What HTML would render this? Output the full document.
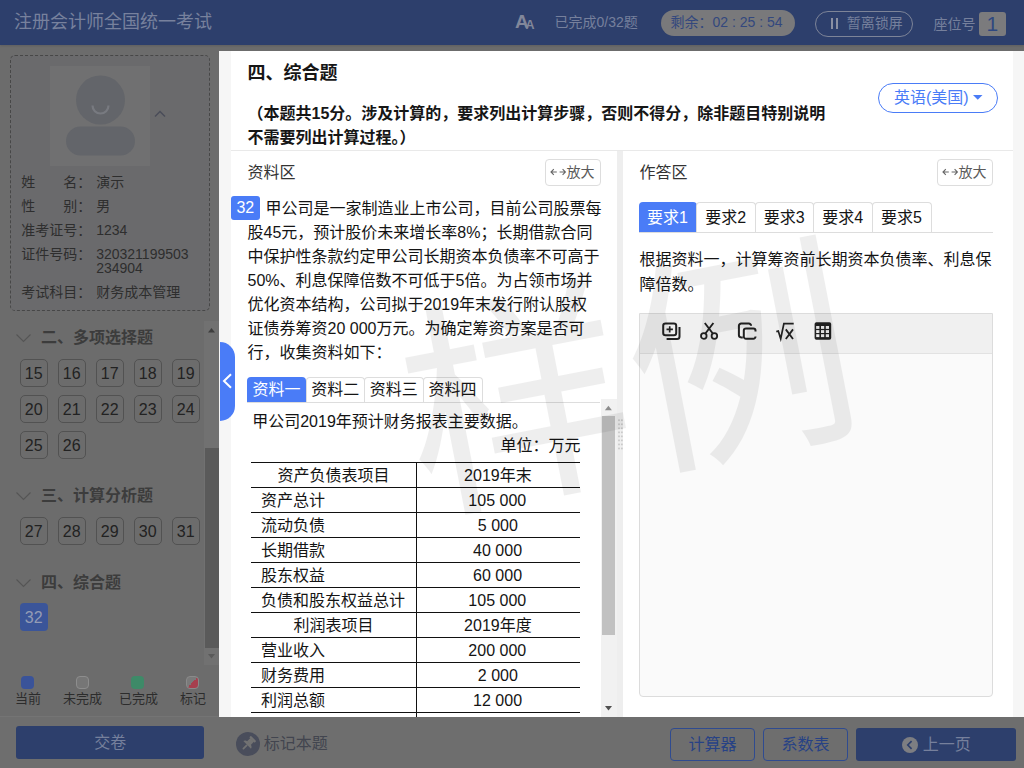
<!DOCTYPE html>
<html lang="zh-CN"><head><meta charset="utf-8"><title>注册会计师全国统一考试</title><style>
html,body{margin:0;padding:0}
body{width:1024px;height:768px;overflow:hidden;position:relative;background:#6c6c6c;font-family:"Liberation Sans","Noto Sans CJK SC",sans-serif}
.b{position:absolute;display:block}
.t{position:absolute;display:block;color:#141414;white-space:pre;overflow:visible;font-family:"Liberation Sans","Noto Sans CJK SC",sans-serif}
#ink{position:absolute;left:0;top:0;pointer-events:none}
</style></head>
<body>
<div class="b" style="left:0px;top:0px;width:1024px;height:45px;background:#2d3f6c;box-shadow:0 1px 2px rgba(0,0,0,.12)"></div>
<div class="b" style="left:661px;top:10px;width:134px;height:25.5px;background:#79797b;border-radius:13px"></div>
<div class="b" style="left:815px;top:11px;width:98px;height:26px;border:1px solid #7d8498;border-radius:13px;box-sizing:border-box"></div>
<div class="b" style="left:831px;top:18px;width:2px;height:10.5px;background:#8a90a3"></div>
<div class="b" style="left:835.5px;top:18px;width:2px;height:10.5px;background:#8a90a3"></div>
<div class="b" style="left:979px;top:12px;width:26.5px;height:23.5px;background:#7b7b7d;border-radius:3px"></div>
<div class="b" style="left:10px;top:55px;width:200px;height:256px;border:1px dashed #474747;border-radius:5px;box-sizing:border-box;background:#6a6a6c"></div>
<div class="b" style="left:50px;top:66px;width:100px;height:100px;background:#707071"></div>
<svg class="b" style="left:50px;top:66px" width="100" height="100" viewBox="0 0 100 100"><circle cx="50.5" cy="34" r="24.5" fill="#63656a"/><rect x="16" y="60.5" width="69" height="29" rx="14.5" fill="#63656a"/><path d="M42.5 39.5a8 8 0 0 0 16 0" fill="none" stroke="#787a80" stroke-width="2.2"/></svg>
<svg class="b" style="left:153px;top:108px" width="14" height="11" viewBox="0 0 14 11"><path d="M2 8.5L7 3.5L12 8.5" fill="none" stroke="#4a4d59" stroke-width="1.5"/></svg>
<svg class="b" style="left:15px;top:332px" width="17" height="12" viewBox="0 0 17 12"><path d="M1.5 2.5L8.5 9.5L15.5 2.5" fill="none" stroke="#555" stroke-width="1.1"/></svg>
<svg class="b" style="left:15px;top:490.3px" width="17" height="12" viewBox="0 0 17 12"><path d="M1.5 2.5L8.5 9.5L15.5 2.5" fill="none" stroke="#555" stroke-width="1.1"/></svg>
<svg class="b" style="left:15px;top:576.5px" width="17" height="12" viewBox="0 0 17 12"><path d="M1.5 2.5L8.5 9.5L15.5 2.5" fill="none" stroke="#555" stroke-width="1.1"/></svg>
<div class="b" style="left:20px;top:359px;width:28px;height:28px;border:1px solid #525252;border-radius:5px;box-sizing:border-box"></div>
<div class="b" style="left:58px;top:359px;width:28px;height:28px;border:1px solid #525252;border-radius:5px;box-sizing:border-box"></div>
<div class="b" style="left:96px;top:359px;width:28px;height:28px;border:1px solid #525252;border-radius:5px;box-sizing:border-box"></div>
<div class="b" style="left:134px;top:359px;width:28px;height:28px;border:1px solid #525252;border-radius:5px;box-sizing:border-box"></div>
<div class="b" style="left:172px;top:359px;width:28px;height:28px;border:1px solid #525252;border-radius:5px;box-sizing:border-box"></div>
<div class="b" style="left:20px;top:395px;width:28px;height:28px;border:1px solid #525252;border-radius:5px;box-sizing:border-box"></div>
<div class="b" style="left:58px;top:395px;width:28px;height:28px;border:1px solid #525252;border-radius:5px;box-sizing:border-box"></div>
<div class="b" style="left:96px;top:395px;width:28px;height:28px;border:1px solid #525252;border-radius:5px;box-sizing:border-box"></div>
<div class="b" style="left:134px;top:395px;width:28px;height:28px;border:1px solid #525252;border-radius:5px;box-sizing:border-box"></div>
<div class="b" style="left:172px;top:395px;width:28px;height:28px;border:1px solid #525252;border-radius:5px;box-sizing:border-box"></div>
<div class="b" style="left:20px;top:431px;width:28px;height:28px;border:1px solid #525252;border-radius:5px;box-sizing:border-box"></div>
<div class="b" style="left:58px;top:431px;width:28px;height:28px;border:1px solid #525252;border-radius:5px;box-sizing:border-box"></div>
<div class="b" style="left:20px;top:517px;width:28px;height:28px;border:1px solid #525252;border-radius:5px;box-sizing:border-box"></div>
<div class="b" style="left:58px;top:517px;width:28px;height:28px;border:1px solid #525252;border-radius:5px;box-sizing:border-box"></div>
<div class="b" style="left:96px;top:517px;width:28px;height:28px;border:1px solid #525252;border-radius:5px;box-sizing:border-box"></div>
<div class="b" style="left:134px;top:517px;width:28px;height:28px;border:1px solid #525252;border-radius:5px;box-sizing:border-box"></div>
<div class="b" style="left:172px;top:517px;width:28px;height:28px;border:1px solid #525252;border-radius:5px;box-sizing:border-box"></div>
<div class="b" style="left:20px;top:603px;width:28px;height:28px;background:#3b5599;border-radius:4px"></div>
<div class="b" style="left:204px;top:321px;width:15px;height:344px;background:#717171"></div>
<div class="b" style="left:205px;top:448px;width:14px;height:199.5px;background:#5a5a5a"></div>
<svg class="b" style="left:204px;top:321px" width="15" height="15" viewBox="0 0 15 15"><path d="M4 11.5L7.5 7L11 11.5z" fill="#3e3e3e"/></svg>
<svg class="b" style="left:204px;top:650px" width="15" height="15" viewBox="0 0 15 15"><path d="M4 4L7.5 8.5L11 4z" fill="#5a5a5a"/></svg>
<div class="b" style="left:21px;top:676px;width:13px;height:13px;background:#3a5399;border-radius:4px"></div>
<div class="b" style="left:76px;top:676px;width:13px;height:13px;background:#767676;border:1px solid #8d8d8d;border-radius:4px;box-sizing:border-box"></div>
<div class="b" style="left:131px;top:676px;width:13px;height:13px;background:#3e8a68;border-radius:4px"></div>
<div class="b" style="left:186px;top:676px;width:13px;height:13px;background:linear-gradient(135deg,#7a7a7a 50%,#a63f4e 50%);border:1px solid #8a8a8a;border-radius:4px;box-sizing:border-box"></div>
<div class="b" style="left:0px;top:716px;width:1024px;height:52px;background:#6e6e6e;border-top:1px solid #747474;box-sizing:border-box"></div>
<div class="b" style="left:16px;top:726px;width:188px;height:33px;background:#2d3f6c;border-radius:3px"></div>
<svg class="b" style="left:236px;top:732px" width="24" height="24" viewBox="0 0 24 24"><circle cx="12" cy="12" r="12" fill="#494d5b"/><g transform="rotate(45 12 12)" fill="#727272"><rect x="8.2" y="4.2" width="7.6" height="2.2" rx=".8"/><rect x="9.4" y="6" width="5.2" height="5"/><path d="M6.6 13.2c0-1.6 2-2.6 2.8-2.6h5.2c.8 0 2.8 1 2.8 2.6z"/><rect x="11.1" y="13" width="1.8" height="6.4" rx=".9"/></g></svg>
<div class="b" style="left:670px;top:728px;width:85px;height:33px;border:1px solid #2f4b90;border-radius:4px;box-sizing:border-box"></div>
<div class="b" style="left:763px;top:728px;width:85px;height:33px;border:1px solid #2f4b90;border-radius:4px;box-sizing:border-box"></div>
<div class="b" style="left:856px;top:728px;width:160px;height:33px;background:#2d3f6c;border-radius:3px"></div>
<svg class="b" style="left:902px;top:737px" width="16" height="16" viewBox="0 0 16 16"><circle cx="8" cy="8" r="8" fill="#7d7e82"/><path d="M9.6 4.2L5.8 8L9.6 11.8" fill="none" stroke="#2d3f6c" stroke-width="1.7"/></svg>
<div class="b" style="left:219px;top:51px;width:805px;height:666px;background:#f6f6f6"></div>
<div class="b" style="left:231px;top:51px;width:782px;height:666px;background:#fff"></div>
<div class="b" style="left:878px;top:83px;width:120px;height:30px;border:1px solid #4a7cf7;border-radius:15px;box-sizing:border-box"></div>
<svg class="b" style="left:972px;top:94px" width="12" height="7" viewBox="0 0 12 7"><path d="M1 1h9.5L5.75 5.8z" fill="#4a7cf7"/></svg>
<div class="b" style="left:231px;top:150px;width:782px;height:1px;background:#e9e9e9"></div>
<div class="b" style="left:617px;top:151px;width:6px;height:566px;background:#eee"></div>
<svg class="b" style="left:617px;top:419px" width="6" height="31" viewBox="0 0 6 31"><rect x="1.2" y="0.4" width="1.6" height="1.7" fill="#c6c6c6"/><rect x="1.2" y="4.43" width="1.6" height="1.7" fill="#c6c6c6"/><rect x="1.2" y="8.46" width="1.6" height="1.7" fill="#c6c6c6"/><rect x="1.2" y="12.49" width="1.6" height="1.7" fill="#c6c6c6"/><rect x="1.2" y="16.52" width="1.6" height="1.7" fill="#c6c6c6"/><rect x="1.2" y="20.55" width="1.6" height="1.7" fill="#c6c6c6"/><rect x="1.2" y="24.58" width="1.6" height="1.7" fill="#c6c6c6"/><rect x="1.2" y="28.61" width="1.6" height="1.7" fill="#c6c6c6"/><rect x="4.1" y="0.4" width="1.6" height="1.7" fill="#c6c6c6"/><rect x="4.1" y="4.43" width="1.6" height="1.7" fill="#c6c6c6"/><rect x="4.1" y="8.46" width="1.6" height="1.7" fill="#c6c6c6"/><rect x="4.1" y="12.49" width="1.6" height="1.7" fill="#c6c6c6"/><rect x="4.1" y="16.52" width="1.6" height="1.7" fill="#c6c6c6"/><rect x="4.1" y="20.55" width="1.6" height="1.7" fill="#c6c6c6"/><rect x="4.1" y="24.58" width="1.6" height="1.7" fill="#c6c6c6"/><rect x="4.1" y="28.61" width="1.6" height="1.7" fill="#c6c6c6"/></svg>
<div class="b" style="left:545.2px;top:159px;width:55.5px;height:26.5px;border:1px solid #ddd;border-radius:4px;box-sizing:border-box"></div>
<svg class="b" style="left:550.2px;top:167px" width="17" height="10" viewBox="0 0 17 10"><path d="M1.2 5h5.6M3.8 2.2L1 5l2.8 2.8M9.6 5h5.6M12.6 2.2L15.4 5l-2.8 2.8" fill="none" stroke="#666" stroke-width="1.1"/></svg>
<div class="b" style="left:231px;top:196px;width:29px;height:23.5px;background:#4a7cf7;border-radius:3px"></div>
<div class="b" style="left:247px;top:377px;width:59px;height:26px;background:#4a7cf7;border-radius:4px 4px 0 0"></div>
<div class="b" style="left:305.5px;top:377px;width:59.5px;height:26px;border:1px solid #ddd;border-bottom:0;border-radius:4px 4px 0 0;box-sizing:border-box"></div>
<div class="b" style="left:364px;top:377px;width:59.5px;height:26px;border:1px solid #ddd;border-bottom:0;border-radius:4px 4px 0 0;box-sizing:border-box"></div>
<div class="b" style="left:422.5px;top:377px;width:60px;height:26px;border:1px solid #ddd;border-bottom:0;border-radius:4px 4px 0 0;box-sizing:border-box"></div>
<div class="b" style="left:247px;top:402px;width:353px;height:1px;background:#ddd"></div>
<div class="b" style="left:251px;top:462px;width:329px;height:1.3px;background:#111"></div>
<div class="b" style="left:251px;top:487px;width:329px;height:1.3px;background:#111"></div>
<div class="b" style="left:251px;top:512px;width:329px;height:1.3px;background:#111"></div>
<div class="b" style="left:251px;top:537px;width:329px;height:1.3px;background:#111"></div>
<div class="b" style="left:251px;top:562px;width:329px;height:1.3px;background:#111"></div>
<div class="b" style="left:251px;top:587px;width:329px;height:1.3px;background:#111"></div>
<div class="b" style="left:251px;top:612px;width:329px;height:1.3px;background:#111"></div>
<div class="b" style="left:251px;top:637px;width:329px;height:1.3px;background:#111"></div>
<div class="b" style="left:251px;top:662px;width:329px;height:1.3px;background:#111"></div>
<div class="b" style="left:251px;top:687px;width:329px;height:1.3px;background:#111"></div>
<div class="b" style="left:251px;top:712px;width:329px;height:1.3px;background:#111"></div>
<div class="b" style="left:416.2px;top:462px;width:1.3px;height:255px;background:#111"></div>
<div class="b" style="left:600.5px;top:399px;width:16.5px;height:318px;background:#f1f1f1"></div>
<div class="b" style="left:602.2px;top:416px;width:12.6px;height:218.5px;background:#c1c1c1"></div>
<svg class="b" style="left:601px;top:401px" width="15" height="13" viewBox="0 0 15 13"><path d="M3.9 9.2L7.4 4.8L10.9 9.2z" fill="#8c8c8c"/></svg>
<svg class="b" style="left:601px;top:702px" width="15" height="13" viewBox="0 0 15 13"><path d="M4 4L7.5 8.5L11 4z" fill="#505050"/></svg>
<div class="b" style="left:937.2px;top:159px;width:55.5px;height:26.5px;border:1px solid #ddd;border-radius:4px;box-sizing:border-box"></div>
<svg class="b" style="left:942.2px;top:167px" width="17" height="10" viewBox="0 0 17 10"><path d="M1.2 5h5.6M3.8 2.2L1 5l2.8 2.8M9.6 5h5.6M12.6 2.2L15.4 5l-2.8 2.8" fill="none" stroke="#666" stroke-width="1.1"/></svg>
<div class="b" style="left:639px;top:202px;width:57.5px;height:31px;background:#4a7cf7;border-radius:4px 4px 0 0"></div>
<div class="b" style="left:696px;top:202px;width:59.75px;height:31px;border:1px solid #ddd;border-bottom:0;border-radius:4px 4px 0 0;box-sizing:border-box"></div>
<div class="b" style="left:754.75px;top:202px;width:59.25px;height:31px;border:1px solid #ddd;border-bottom:0;border-radius:4px 4px 0 0;box-sizing:border-box"></div>
<div class="b" style="left:813px;top:202px;width:59.75px;height:31px;border:1px solid #ddd;border-bottom:0;border-radius:4px 4px 0 0;box-sizing:border-box"></div>
<div class="b" style="left:871.75px;top:202px;width:59.75px;height:31px;border:1px solid #ddd;border-bottom:0;border-radius:4px 4px 0 0;box-sizing:border-box"></div>
<div class="b" style="left:639px;top:232px;width:354px;height:1px;background:#ddd"></div>
<div class="b" style="left:639px;top:312.5px;width:354px;height:384px;background:#fafafa;border:1px solid #dcdcdc;border-radius:0 0 4px 4px;box-sizing:border-box"></div>
<div class="b" style="left:640px;top:313.5px;width:352px;height:39px;background:#f0f0f0;border-bottom:1px solid #e2e2e2"></div>
<svg class="b" style="left:660px;top:320px" width="22" height="22" viewBox="0 0 22 22"><rect x="3.2" y="3.5" width="13" height="11.8" rx="2.3" fill="none" stroke="#222" stroke-width="2"/><path d="M6.5 9.4h6.4M9.7 6.2v6.4" stroke="#222" stroke-width="1.7" fill="none"/><path d="M6.6 18.9h10.4a2.5 2.5 0 0 0 2.5-2.5V7" fill="none" stroke="#222" stroke-width="2"/></svg>
<svg class="b" style="left:698px;top:320px" width="22" height="22" viewBox="0 0 22 22"><circle cx="5.8" cy="16" r="2.8" fill="none" stroke="#222" stroke-width="1.8"/><circle cx="16.4" cy="16" r="2.8" fill="none" stroke="#222" stroke-width="1.8"/><path d="M6.8 3L15 13.8M15.4 3L7.2 13.8" stroke="#222" stroke-width="1.9" fill="none"/></svg>
<svg class="b" style="left:736px;top:320px" width="22" height="22" viewBox="0 0 22 22"><path d="M6.8 17.4H5.2a2.3 2.3 0 0 1-2.3-2.3V5.8a2.3 2.3 0 0 1 2.3-2.3h7.6a2.3 2.3 0 0 1 2.3 2.3" fill="none" stroke="#222" stroke-width="2"/><path d="M19.5 11.4V10.6a2.2 2.2 0 0 0-2.2-2.2H10a2.2 2.2 0 0 0-2.2 2.2v6a2.2 2.2 0 0 0 2.2 2.2h7.3a2.2 2.2 0 0 0 2.2-2.2V16.6" fill="none" stroke="#222" stroke-width="2"/></svg>
<svg class="b" style="left:774px;top:320px" width="22" height="22" viewBox="0 0 22 22"><path d="M2.3 11.6l2-.6 2.4 7.8L9.9 3.6h9.8" fill="none" stroke="#222" stroke-width="1.7"/><path d="M11.8 9.4l7.2 9.6M19 9.4l-7.2 9.6" stroke="#222" stroke-width="1.8" fill="none"/></svg>
<svg class="b" style="left:814px;top:321px" width="18" height="20" viewBox="0 0 18 20"><rect x=".6" y="1.2" width="16.6" height="17.6" rx="1.8" fill="#222"/><rect x="2.2" y="5.0" width="3.2" height="2.9" fill="#f0f0f0"/><rect x="2.2" y="9.1" width="3.2" height="2.9" fill="#f0f0f0"/><rect x="2.2" y="13.2" width="3.2" height="2.9" fill="#f0f0f0"/><rect x="7.0" y="5.0" width="3.2" height="2.9" fill="#f0f0f0"/><rect x="7.0" y="9.1" width="3.2" height="2.9" fill="#f0f0f0"/><rect x="7.0" y="13.2" width="3.2" height="2.9" fill="#f0f0f0"/><rect x="11.8" y="5.0" width="3.2" height="2.9" fill="#f0f0f0"/><rect x="11.8" y="9.1" width="3.2" height="2.9" fill="#f0f0f0"/><rect x="11.8" y="13.2" width="3.2" height="2.9" fill="#f0f0f0"/></svg>
<div class="b" style="left:220px;top:341.5px;width:15px;height:79px;background:#4a7cf7;border-radius:0 15px 15px 0"></div>
<svg class="b" style="left:221px;top:372px" width="12" height="18" viewBox="0 0 12 18"><path d="M10 2.2L3 9l7 6.8" fill="none" stroke="#fff" stroke-width="2"/></svg>
<span class="t" style="left:14px;top:11.25px;width:198px;height:22.5px;font-size:18px;line-height:22.5px;color:#77819d">注册会计师全国统一考试</span>
<span class="t" style="left:515px;top:10.4px;width:13.4px;height:23.8px;font-size:19px;line-height:23.8px;font-weight:bold;color:#81879a">A</span>
<span class="t" style="left:525.6px;top:17.5px;width:8.8px;height:15.6px;font-size:12.5px;line-height:15.6px;font-weight:bold;color:#81879a">A</span>
<span class="t" style="left:554.5px;top:14.45px;width:86.5px;height:17.5px;font-size:14px;line-height:17.5px;color:#76809c">已完成0/32题</span>
<span class="t" style="left:670.5px;top:14.25px;width:115px;height:17.5px;font-size:14px;line-height:17.5px;color:#33487e">剩余：02 : 25 : 54</span>
<span class="t" style="left:846.75px;top:14.55px;width:56.5px;height:17.5px;font-size:14px;line-height:17.5px;color:#76809c">暂离锁屏</span>
<span class="t" style="left:933.5px;top:16.25px;width:42px;height:17.5px;font-size:14px;line-height:17.5px;color:#76809c">座位号</span>
<span class="t" style="left:986.47px;top:10.5px;width:11.65px;height:26.2px;font-size:21px;line-height:26.2px;color:#2f4880">1</span>
<span class="t" style="left:21.2px;top:174.25px;width:70px;height:17.5px;font-size:14px;line-height:17.5px;color:#2e2e2e">姓　　名：</span>
<span class="t" style="left:96.2px;top:174.25px;width:28px;height:17.5px;font-size:14px;line-height:17.5px;color:#2e2e2e">演示</span>
<span class="t" style="left:21.2px;top:198.25px;width:70px;height:17.5px;font-size:14px;line-height:17.5px;color:#2e2e2e">性　　别：</span>
<span class="t" style="left:96.2px;top:198.25px;width:14px;height:17.5px;font-size:14px;line-height:17.5px;color:#2e2e2e">男</span>
<span class="t" style="left:21.2px;top:222.25px;width:70px;height:17.5px;font-size:14px;line-height:17.5px;color:#2e2e2e">准考证号：</span>
<span class="t" style="left:96.2px;top:222.25px;width:32.5px;height:17.5px;font-size:14px;line-height:17.5px;color:#2e2e2e">1234</span>
<span class="t" style="left:21.2px;top:246.25px;width:70px;height:17.5px;font-size:14px;line-height:17.5px;color:#2e2e2e">证件号码：</span>
<span class="t" style="left:96.2px;top:246.25px;width:97.5px;height:17.5px;font-size:14px;line-height:17.5px;color:#2e2e2e">320321199503</span>
<span class="t" style="left:21.2px;top:284.25px;width:70px;height:17.5px;font-size:14px;line-height:17.5px;color:#2e2e2e">考试科目：</span>
<span class="t" style="left:96.2px;top:284.25px;width:84px;height:17.5px;font-size:14px;line-height:17.5px;color:#2e2e2e">财务成本管理</span>
<span class="t" style="left:96.2px;top:259.75px;width:48.7px;height:17.5px;font-size:14px;line-height:17.5px;color:#2e2e2e">234904</span>
<span class="t" style="left:41px;top:328px;width:112px;height:20px;font-size:16px;line-height:20px;font-weight:bold;color:#3c3c3c">二、多项选择题</span>
<span class="t" style="left:41px;top:486.3px;width:112px;height:20px;font-size:16px;line-height:20px;font-weight:bold;color:#3c3c3c">三、计算分析题</span>
<span class="t" style="left:41px;top:572.5px;width:80px;height:20px;font-size:16px;line-height:20px;font-weight:bold;color:#3c3c3c">四、综合题</span>
<span class="t" style="left:24.8px;top:363.8px;width:18.4px;height:20px;font-size:16px;line-height:20px;color:#222">15</span>
<span class="t" style="left:62.8px;top:363.8px;width:18.4px;height:20px;font-size:16px;line-height:20px;color:#222">16</span>
<span class="t" style="left:100.8px;top:363.8px;width:18.4px;height:20px;font-size:16px;line-height:20px;color:#222">17</span>
<span class="t" style="left:138.8px;top:363.8px;width:18.4px;height:20px;font-size:16px;line-height:20px;color:#222">18</span>
<span class="t" style="left:176.8px;top:363.8px;width:18.4px;height:20px;font-size:16px;line-height:20px;color:#222">19</span>
<span class="t" style="left:24.8px;top:399.8px;width:18.4px;height:20px;font-size:16px;line-height:20px;color:#222">20</span>
<span class="t" style="left:62.8px;top:399.8px;width:18.4px;height:20px;font-size:16px;line-height:20px;color:#222">21</span>
<span class="t" style="left:100.8px;top:399.8px;width:18.4px;height:20px;font-size:16px;line-height:20px;color:#222">22</span>
<span class="t" style="left:138.8px;top:399.8px;width:18.4px;height:20px;font-size:16px;line-height:20px;color:#222">23</span>
<span class="t" style="left:176.8px;top:399.8px;width:18.4px;height:20px;font-size:16px;line-height:20px;color:#222">24</span>
<span class="t" style="left:24.8px;top:435.8px;width:18.4px;height:20px;font-size:16px;line-height:20px;color:#222">25</span>
<span class="t" style="left:62.8px;top:435.8px;width:18.4px;height:20px;font-size:16px;line-height:20px;color:#222">26</span>
<span class="t" style="left:24.8px;top:521.8px;width:18.4px;height:20px;font-size:16px;line-height:20px;color:#222">27</span>
<span class="t" style="left:62.8px;top:521.8px;width:18.4px;height:20px;font-size:16px;line-height:20px;color:#222">28</span>
<span class="t" style="left:100.8px;top:521.8px;width:18.4px;height:20px;font-size:16px;line-height:20px;color:#222">29</span>
<span class="t" style="left:138.8px;top:521.8px;width:18.4px;height:20px;font-size:16px;line-height:20px;color:#222">30</span>
<span class="t" style="left:176.8px;top:521.8px;width:18.4px;height:20px;font-size:16px;line-height:20px;color:#222">31</span>
<span class="t" style="left:24.8px;top:607.8px;width:18.4px;height:20px;font-size:16px;line-height:20px;color:#949cb5">32</span>
<span class="t" style="left:15px;top:690.9px;width:25.5px;height:16.2px;font-size:13px;line-height:16.2px;color:#2c2c2c">当前</span>
<span class="t" style="left:63px;top:690.9px;width:39px;height:16.2px;font-size:13px;line-height:16.2px;color:#2c2c2c">未完成</span>
<span class="t" style="left:119px;top:690.9px;width:38.5px;height:16.2px;font-size:13px;line-height:16.2px;color:#2c2c2c">已完成</span>
<span class="t" style="left:180px;top:690.9px;width:25.5px;height:16.2px;font-size:13px;line-height:16.2px;color:#2c2c2c">标记</span>
<span class="t" style="left:94.2px;top:733px;width:32px;height:20px;font-size:16px;line-height:20px;color:#76809c">交卷</span>
<span class="t" style="left:263.7px;top:734.3px;width:64.5px;height:20px;font-size:16px;line-height:20px;color:#42454f">标记本题</span>
<span class="t" style="left:688.5px;top:735.3px;width:48px;height:20px;font-size:16px;line-height:20px;color:#274285">计算器</span>
<span class="t" style="left:781.5px;top:735.3px;width:48px;height:20px;font-size:16px;line-height:20px;color:#274285">系数表</span>
<span class="t" style="left:922.7px;top:735px;width:47.5px;height:20px;font-size:16px;line-height:20px;color:#76809c">上一页</span>
<span class="t" style="left:247.5px;top:61.75px;width:89.5px;height:22.5px;font-size:18px;line-height:22.5px;font-weight:bold;color:#161616">四、综合题</span>
<span class="t" style="left:247.5px;top:104px;width:578.88px;height:20px;font-size:16px;line-height:20px;font-weight:bold;color:#161616">（本题共15分。涉及计算的，要求列出计算步骤，否则不得分，除非题目特别说明</span>
<span class="t" style="left:247.5px;top:128px;width:176px;height:20px;font-size:16px;line-height:20px;font-weight:bold;color:#161616">不需要列出计算过程。）</span>
<span class="t" style="left:894px;top:88px;width:74px;height:20px;font-size:16px;line-height:20px;color:#4a7cf7">英语(美国)</span>
<span class="t" style="left:247.5px;top:162.5px;width:47px;height:20px;font-size:16px;line-height:20px;color:#333">资料区</span>
<span class="t" style="left:566.4px;top:164.25px;width:28.3px;height:17.5px;font-size:14px;line-height:17.5px;color:#5a5a5a">放大</span>
<span class="t" style="left:236.4px;top:198px;width:18.4px;height:20px;font-size:16px;line-height:20px;color:#fff">32</span>
<span class="t" style="left:265.5px;top:199px;width:336px;height:20px;font-size:16px;line-height:20px">甲公司是一家制造业上市公司，目前公司股票每</span>
<span class="t" style="left:247.5px;top:223px;width:345.38px;height:20px;font-size:16px;line-height:20px">股45元，预计股价未来增长率8%；长期借款合同</span>
<span class="t" style="left:247.5px;top:247px;width:352px;height:20px;font-size:16px;line-height:20px">中保护性条款约定甲公司长期资本负债率不可高于</span>
<span class="t" style="left:247.5px;top:271px;width:345.38px;height:20px;font-size:16px;line-height:20px">50%、利息保障倍数不可低于5倍。为占领市场并</span>
<span class="t" style="left:247.5px;top:295px;width:339.52px;height:20px;font-size:16px;line-height:20px">优化资本结构，公司拟于2019年末发行附认股权</span>
<span class="t" style="left:247.5px;top:319px;width:335.98px;height:20px;font-size:16px;line-height:20px">证债券筹资20 000万元。为确定筹资方案是否可</span>
<span class="t" style="left:247.5px;top:343px;width:144px;height:20px;font-size:16px;line-height:20px">行，收集资料如下：</span>
<span class="t" style="left:252.5px;top:380px;width:48px;height:20px;font-size:16px;line-height:20px;color:#fff">资料一</span>
<span class="t" style="left:311.25px;top:380px;width:48px;height:20px;font-size:16px;line-height:20px">资料二</span>
<span class="t" style="left:369.75px;top:380px;width:48px;height:20px;font-size:16px;line-height:20px">资料三</span>
<span class="t" style="left:428.5px;top:380px;width:48px;height:20px;font-size:16px;line-height:20px">资料四</span>
<span class="t" style="left:252.2px;top:411.7px;width:275.52px;height:20px;font-size:16px;line-height:20px">甲公司2019年预计财务报表主要数据。</span>
<span class="t" style="left:500.5px;top:435.5px;width:79.5px;height:20px;font-size:16px;line-height:20px">单位：万元</span>
<span class="t" style="left:277.5px;top:465.7px;width:112px;height:20px;font-size:16px;line-height:20px">资产负债表项目</span>
<span class="t" style="left:464.1px;top:465.7px;width:69px;height:20px;font-size:16px;line-height:20px">2019年末</span>
<span class="t" style="left:261px;top:490.7px;width:64px;height:20px;font-size:16px;line-height:20px">资产总计</span>
<span class="t" style="left:468.35px;top:490.7px;width:60.5px;height:20px;font-size:16px;line-height:20px">105 000</span>
<span class="t" style="left:261px;top:515.7px;width:64px;height:20px;font-size:16px;line-height:20px">流动负债</span>
<span class="t" style="left:477.85px;top:515.7px;width:41.5px;height:20px;font-size:16px;line-height:20px">5 000</span>
<span class="t" style="left:261px;top:540.7px;width:64px;height:20px;font-size:16px;line-height:20px">长期借款</span>
<span class="t" style="left:473.1px;top:540.7px;width:51px;height:20px;font-size:16px;line-height:20px">40 000</span>
<span class="t" style="left:261px;top:565.7px;width:64px;height:20px;font-size:16px;line-height:20px">股东权益</span>
<span class="t" style="left:473.1px;top:565.7px;width:51px;height:20px;font-size:16px;line-height:20px">60 000</span>
<span class="t" style="left:261px;top:590.7px;width:144px;height:20px;font-size:16px;line-height:20px">负债和股东权益总计</span>
<span class="t" style="left:468.35px;top:590.7px;width:60.5px;height:20px;font-size:16px;line-height:20px">105 000</span>
<span class="t" style="left:293.5px;top:615.7px;width:80px;height:20px;font-size:16px;line-height:20px">利润表项目</span>
<span class="t" style="left:464.1px;top:615.7px;width:69px;height:20px;font-size:16px;line-height:20px">2019年度</span>
<span class="t" style="left:261px;top:640.7px;width:64px;height:20px;font-size:16px;line-height:20px">营业收入</span>
<span class="t" style="left:468.35px;top:640.7px;width:60.5px;height:20px;font-size:16px;line-height:20px">200 000</span>
<span class="t" style="left:261px;top:665.7px;width:64px;height:20px;font-size:16px;line-height:20px">财务费用</span>
<span class="t" style="left:477.85px;top:665.7px;width:41.5px;height:20px;font-size:16px;line-height:20px">2 000</span>
<span class="t" style="left:261px;top:690.7px;width:64px;height:20px;font-size:16px;line-height:20px">利润总额</span>
<span class="t" style="left:473.1px;top:690.7px;width:51px;height:20px;font-size:16px;line-height:20px">12 000</span>
<span class="t" style="left:639.5px;top:162.5px;width:47px;height:20px;font-size:16px;line-height:20px;color:#333">作答区</span>
<span class="t" style="left:958.4px;top:164.25px;width:28.3px;height:17.5px;font-size:14px;line-height:17.5px;color:#5a5a5a">放大</span>
<span class="t" style="left:647.1px;top:208.3px;width:41.3px;height:20px;font-size:16px;line-height:20px;color:#fff">要求1</span>
<span class="t" style="left:705.23px;top:208.3px;width:41.3px;height:20px;font-size:16px;line-height:20px">要求2</span>
<span class="t" style="left:763.73px;top:208.3px;width:41.3px;height:20px;font-size:16px;line-height:20px">要求3</span>
<span class="t" style="left:822.23px;top:208.3px;width:41.3px;height:20px;font-size:16px;line-height:20px">要求4</span>
<span class="t" style="left:880.98px;top:208.3px;width:41.3px;height:20px;font-size:16px;line-height:20px">要求5</span>
<span class="t" style="left:639.5px;top:250.3px;width:352px;height:20px;font-size:16px;line-height:20px">根据资料一，计算筹资前长期资本负债率、利息保</span>
<span class="t" style="left:639.5px;top:274.8px;width:64px;height:20px;font-size:16px;line-height:20px">障倍数。</span>
<svg id="ink" width="1024" height="768" viewBox="0 0 1024 768">
<g opacity=".062"><text transform="translate(630 385) rotate(-11)" x="0" y="78" text-anchor="middle" font-size="228" fill="#000" font-family="'Liberation Sans','Noto Sans CJK SC',sans-serif">样例</text></g>
</svg>
</body></html>
